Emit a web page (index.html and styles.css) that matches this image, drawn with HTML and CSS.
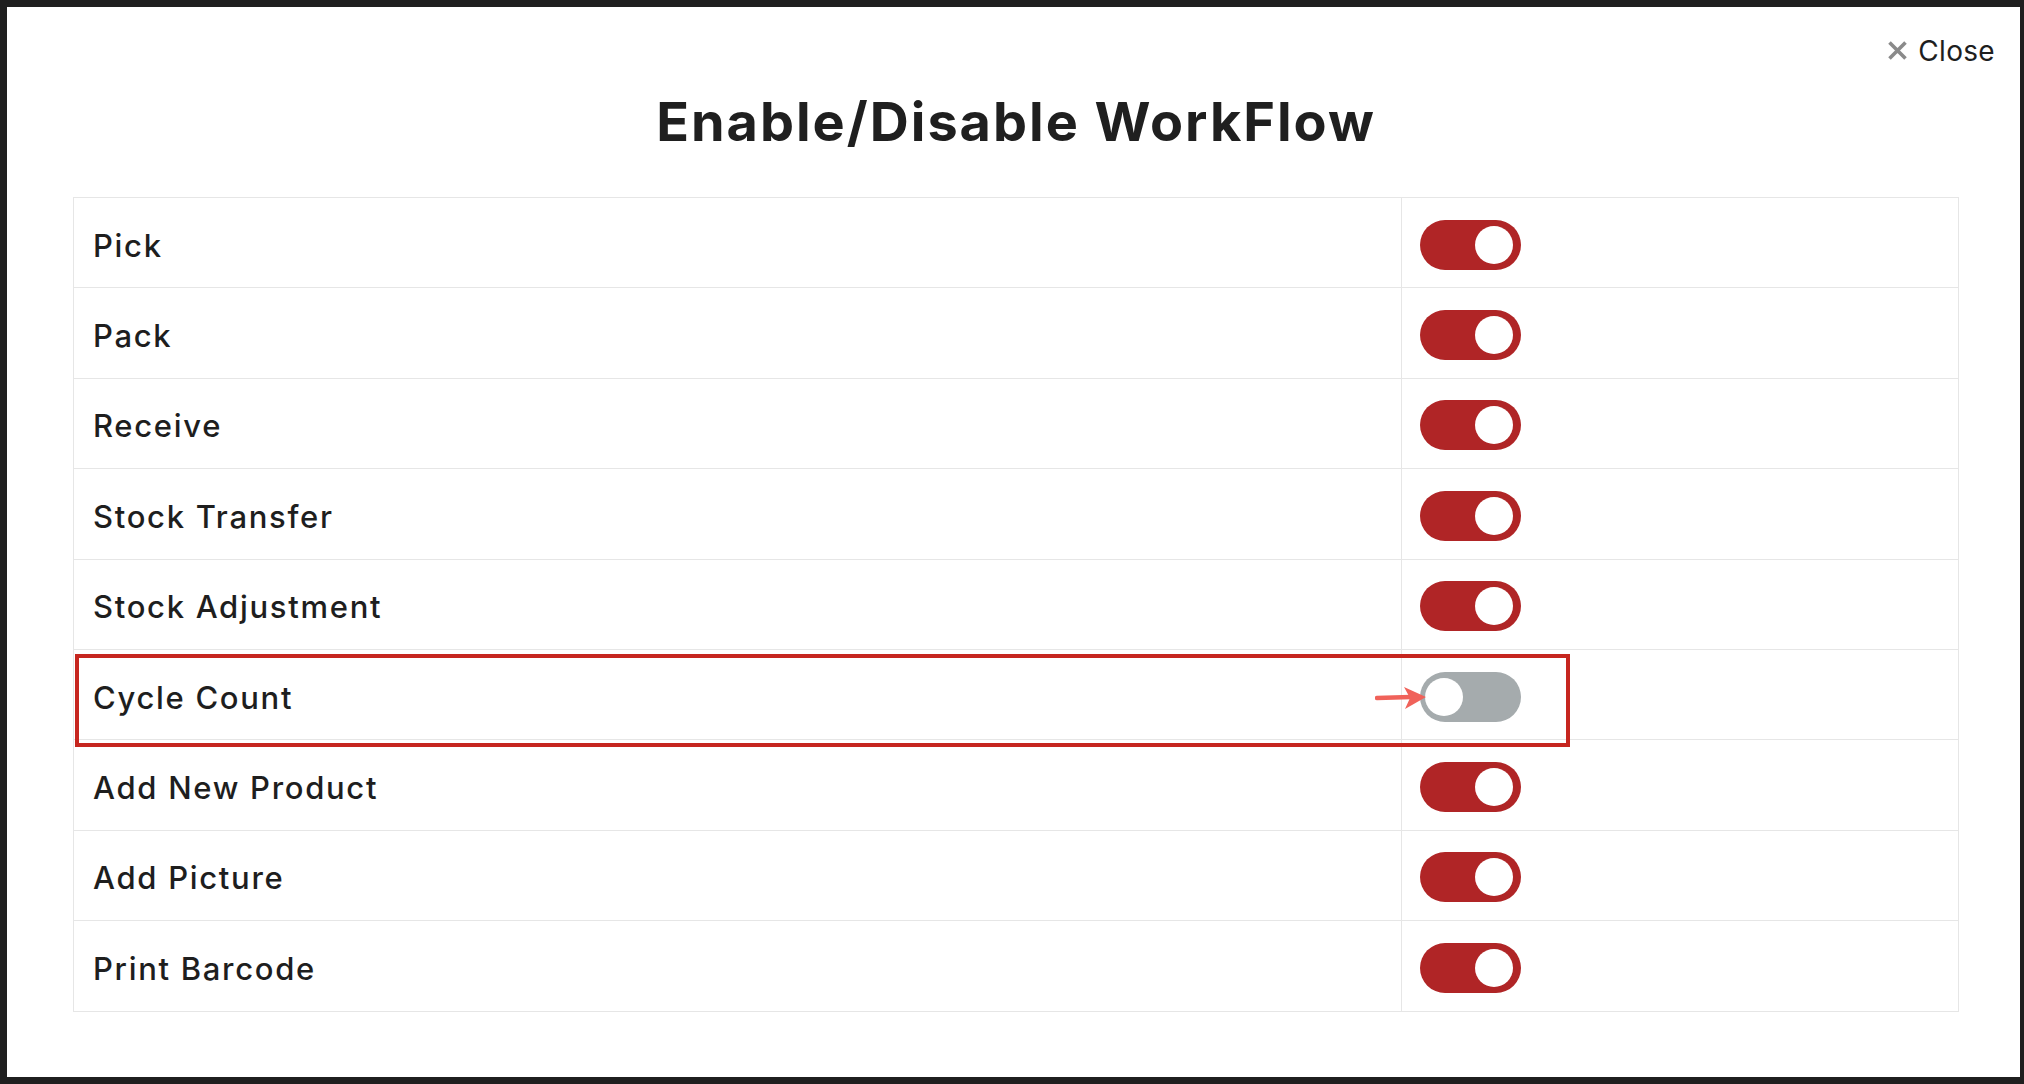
FILE: index.html
```html
<!DOCTYPE html>
<html lang="en">
<head>
<meta charset="utf-8">
<title>Enable/Disable WorkFlow</title>
<link rel="stylesheet" href="styles.css">
</head>
<body>
<div class="frame">
  <div class="topbar">
    <button class="close" type="button">
      <svg class="close-icon" width="21" height="21" viewBox="0 0 21 21" aria-hidden="true">
        <path d="M2.5 2.5 L18.5 18.5 M18.5 2.5 L2.5 18.5" stroke="#8a8a8a" stroke-width="3.6" stroke-linecap="butt"/>
      </svg>
      <span>Close</span>
    </button>
  </div>
  <h1 class="title">Enable/Disable WorkFlow</h1>
  <div class="table">
    <div class="row"><div class="label">Pick</div><div class="ctrl"><span class="toggle on"><span class="knob"></span></span></div></div>
    <div class="row"><div class="label">Pack</div><div class="ctrl"><span class="toggle on"><span class="knob"></span></span></div></div>
    <div class="row"><div class="label">Receive</div><div class="ctrl"><span class="toggle on"><span class="knob"></span></span></div></div>
    <div class="row"><div class="label">Stock Transfer</div><div class="ctrl"><span class="toggle on"><span class="knob"></span></span></div></div>
    <div class="row"><div class="label">Stock Adjustment</div><div class="ctrl"><span class="toggle on"><span class="knob"></span></span></div></div>
    <div class="row highlighted">
      <div class="label">Cycle Count</div>
      <div class="ctrl"><span class="toggle off"><span class="knob"></span></span></div>
      <span class="highlight-box"></span>
      <svg class="arrow" width="52" height="24" viewBox="0 0 52 24" aria-hidden="true">
        <path d="M2 12 L36 11" stroke="#f0625a" stroke-width="4.5" stroke-linecap="round"/>
        <path d="M29 1 L51 11 L30 23 L35 12 Z" fill="#f0625a"/>
      </svg>
    </div>
    <div class="row"><div class="label">Add New Product</div><div class="ctrl"><span class="toggle on"><span class="knob"></span></span></div></div>
    <div class="row"><div class="label">Add Picture</div><div class="ctrl"><span class="toggle on"><span class="knob"></span></span></div></div>
    <div class="row"><div class="label">Print Barcode</div><div class="ctrl"><span class="toggle on"><span class="knob"></span></span></div></div>
  </div>
</div>
</body>
</html>
```
FILE: styles.css
```css
* { box-sizing: border-box; }
html, body { margin: 0; padding: 0; background: #1c1c1c; }
body { font-family: Inter, "Noto Sans", sans-serif; color: #1e1e1e; }

.frame {
  width: 2024px;
  height: 1084px;
  background: #ffffff;
  border-style: solid;
  border-color: #1f1f1f;
  border-width: 7px 4px 7px 7px;
  padding: 0 61px 0 66px;
}

.topbar {
  display: flex;
  justify-content: flex-end;
  padding-top: 27px;
  margin-right: -36px;
}
.close {
  display: flex;
  align-items: center;
  gap: 10px;
  border: 0;
  background: transparent;
  padding: 0;
  font-family: Inter, "Noto Sans", sans-serif;
  font-size: 28px;
  line-height: 34px;
  font-weight: 400;
  color: #1e1e1e;
  letter-spacing: 0.3px;
}
.close-icon { display: block; margin-top: -1px; }

.title {
  margin: 21px 0 43px;
  text-align: center;
  font-size: 54px;
  line-height: 65px;
  font-weight: 700;
  color: #1f1f1f;
  letter-spacing: 2px;
}

.table {
  border: 1px solid #e6e6e6;
  border-bottom: 0;
}
.row {
  position: relative;
  display: grid;
  grid-template-columns: 1327px 1fr;
  height: 90.4px;
  border-bottom: 1px solid #e6e6e6;
}
.label {
  display: flex;
  align-items: center;
  padding: 5px 0 0 19px;
  font-size: 31px;
  font-weight: 500;
  color: #1e1e1e;
  letter-spacing: 1.7px;
}
.ctrl {
  display: flex;
  align-items: center;
  padding: 4px 0 0 18px;
  border-left: 1px solid #e6e6e6;
}

.toggle {
  position: relative;
  display: block;
  width: 101px;
  height: 50px;
  border-radius: 25px;
}
.toggle.on { background: #b02526; }
.toggle.off { background: #a5abad; }
.knob {
  position: absolute;
  top: 6px;
  width: 38px;
  height: 38px;
  border-radius: 50%;
  background: #ffffff;
}
.toggle.on .knob { left: 55px; }
.toggle.off .knob { left: 5px; }

.highlight-box {
  position: absolute;
  left: 1px;
  top: 4px;
  width: 1495px;
  height: 93px;
  border: 4px solid #c6261f;
  pointer-events: none;
  z-index: 2;
}
.arrow {
  position: absolute;
  left: 1301px;
  top: 36px;
  z-index: 3;
}
```
